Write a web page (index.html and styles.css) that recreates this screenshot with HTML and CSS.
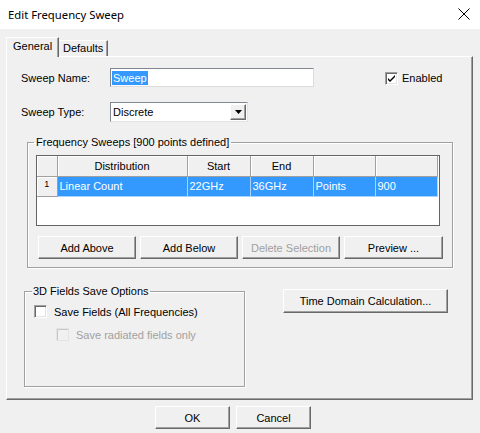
FILE: index.html
```html
<!doctype html>
<html lang="en">
   <head>
      <meta charset="UTF-8" />
      <title>Edit Frequency Sweep</title>
      <link rel="stylesheet" href="styles.css">
   </head>
   <body>
      <div class="titlebar">
         <span class="title">Edit Frequency Sweep</span>
         <svg class="close" width="12" height="12" viewBox="0 0 12 12">
            <path d="M0.5 0.5 L11.5 11.5 M11.5 0.5 L0.5 11.5" stroke="#000" stroke-width="1" fill="none" />
         </svg>
      </div>
      <div class="client">
         <div class="tabs">
            <div class="tab active">General</div>
            <div class="tab">Defaults</div>
         </div>
         <div class="panel">
            <div class="row row-name">
               <span class="lbl">Sweep Name:</span>
               <div class="edit"><span class="sel">Sweep</span></div>
               <div class="check enabled">
                  <span class="box">
                     <svg width="9" height="9" viewBox="0 0 9 9">
                        <path d="M1 4 L3 6 L8 1 L8 3 L3 8 L1 6 Z" fill="#000" />
                     </svg>
                  </span>
                  Enabled
               </div>
            </div>
            <div class="row row-type">
               <span class="lbl">Sweep Type:</span>
               <div class="combo">
                  <span class="combo-text">Discrete</span>
                  <span class="drop">
                     <svg width="7" height="4" viewBox="0 0 7 4"><path d="M0 0 H7 L3.5 4 Z" fill="#000" /></svg>
                  </span>
               </div>
            </div>
            <fieldset class="group sweeps">
               <legend>Frequency Sweeps [900 points defined]</legend>
               <div class="grid">
                  <table>
                     <tr class="head">
                        <th class="rh c0"></th>
                        <th class="c1">Distribution</th>
                        <th class="c2">Start</th>
                        <th class="c3">End</th>
                        <th class="c4"></th>
                        <th class="c5"></th>
                     </tr>
                     <tr class="selected">
                        <td class="rh">1</td>
                        <td>Linear Count</td>
                        <td>22GHz</td>
                        <td>36GHz</td>
                        <td>Points</td>
                        <td>900</td>
                     </tr>
                  </table>
               </div>
               <div class="btnrow">
                  <button class="btn">Add Above</button>
                  <button class="btn">Add Below</button>
                  <button class="btn" disabled>Delete Selection</button>
                  <button class="btn wide">Preview ...</button>
               </div>
            </fieldset>
            <div class="lower">
               <fieldset class="group fields">
                  <legend>3D Fields Save Options</legend>
                  <div class="check">
                     <span class="box"></span>
                     Save Fields (All Frequencies)
                  </div>
                  <div class="check sub disabled">
                     <span class="box"></span>
                     Save radiated fields only
                  </div>
               </fieldset>
               <button class="btn time">Time Domain Calculation...</button>
            </div>
         </div>
         <div class="footer">
            <button class="btn dlg">OK</button>
            <button class="btn dlg">Cancel</button>
         </div>
      </div>
   </body>
</html>
```

FILE: styles.css
```css
* {
   margin: 0;
   padding: 0;
   box-sizing: border-box;
   font-family: "Liberation Sans", Arial, sans-serif;
   font-size: 11px;
   color: #000;
}
body {
   width: 480px;
   height: 433px;
   background: #f0f0f0;
   overflow: hidden;
}
.titlebar {
   height: 29px;
   background: #fff;
   display: flex;
   align-items: center;
   justify-content: space-between;
   padding: 0 10px 0 8px;
}
.title {
   font-family: "Noto Sans", sans-serif;
   font-size: 11.3px;
}
.close {
   display: block;
   margin-top: -1px;
}
.tabs {
   display: flex;
   align-items: flex-end;
   height: 19px;
   margin: 8px 0 0 6px;
}
.tab {
   height: 16px;
   line-height: 15px;
   padding: 0 4px 0 4px;
   width: 49px;
   border-top: 1px solid #fff;
   border-right: 1px solid #696969;
   box-shadow: inset -1px 0 0 #a0a0a0;
}
.tab.active {
   position: relative;
   z-index: 1;
   width: 53px;
   height: 20px;
   margin-bottom: -1px;
   padding-left: 6px;
   line-height: 16px;
   background: #f0f0f0;
   border-left: 1px solid #fff;
}
.panel {
   width: 467px;
   height: 344px;
   margin-left: 6px;
   padding: 11px 0 0 14px;
   border: 1px solid #fff;
   border-right-color: #696969;
   border-bottom-color: #696969;
   box-shadow: inset -1px -1px 0 #a0a0a0;
}
.row {
   display: flex;
   align-items: center;
}
.lbl {
   width: 89px;
}
.edit {
   width: 204px;
   height: 19px;
   background: #fff;
   border: 1px solid #dcdcdc;
   border-top-color: #828790;
   border-left-color: #828790;
   padding: 2px 0 0 1px;
}
.sel {
   display: inline-block;
   height: 14px;
   line-height: 14px;
   padding: 0 1px;
   background: #3399ff;
   color: #fff;
}
.check {
   display: flex;
   align-items: center;
   height: 13px;
}
.box {
   display: flex;
   align-items: center;
   justify-content: center;
   width: 13px;
   height: 13px;
   margin-right: 6px;
   background: #fff;
   border: 1px solid #fff;
   border-top-color: #a0a0a0;
   border-left-color: #a0a0a0;
   box-shadow: inset 1px 1px 0 #696969, inset -1px -1px 0 #e3e3e3;
}
.box svg {
   display: block;
}
.enabled {
   margin-left: 71px;
   margin-top: 1px;
}
.enabled .box {
   margin-right: 4px;
}
.row-type {
   margin-top: 15px;
}
.combo {
   display: flex;
   align-items: center;
   justify-content: space-between;
   width: 138px;
   height: 20px;
   background: #fff;
   border: 1px solid #e3e3e3;
   border-top-color: #828790;
   border-left-color: #828790;
   padding: 0 1px 0 2px;
}
.drop {
   display: flex;
   align-items: center;
   justify-content: center;
   width: 16px;
   height: 16px;
   background: #f0f0f0;
   border: 1px solid #fff;
   border-right-color: #696969;
   border-bottom-color: #696969;
   box-shadow: inset -1px -1px 0 #a0a0a0;
}
.drop svg {
   display: block;
}
.group {
   border: 1px solid #a0a0a0;
   box-shadow: inset 1px 1px 0 #fff, 1px 1px 0 #fff;
}
.group legend {
   padding: 0 2px;
   margin-left: -2px;
   line-height: 13px;
}
.sweeps {
   width: 426px;
   margin: 14px 0 0 6px;
   padding: 6px 0 8px 8px;
}
.grid {
   width: 404px;
   height: 71px;
   background: #fff;
   border: 1px solid #646464;
}
table {
   border-collapse: collapse;
   table-layout: fixed;
   width: 400px;
}
th,
td {
   height: 20px;
   font-weight: normal;
   white-space: nowrap;
   overflow: hidden;
}
th {
   background: #f0f0f0;
   text-align: center;
   border-right: 1px solid #a0a0a0;
   border-bottom: 1px solid #a0a0a0;
   box-shadow: inset 1px 1px 0 #fff;
}
.c0 { width: 20px; }
.c1 { width: 130px; }
.c2 { width: 63px; }
.c3 { width: 63px; }
.c4 { width: 62px; }
.c5 { width: 62px; }
.selected td {
   background: #3399ff;
   color: #fff;
   text-align: left;
   padding-left: 2px;
   border-right: 1px solid #a8d2ff;
   border-bottom: 1px solid #a8d2ff;
}
.selected td.rh {
   background: #f0f0f0;
   color: #000;
   font-size: 9px;
   vertical-align: top;
   text-align: center;
   padding: 2px 0 0 0;
   border-right: 1px solid #a0a0a0;
   border-bottom: 1px solid #a0a0a0;
   box-shadow: inset 1px 1px 0 #fff;
}
.btnrow {
   display: flex;
   gap: 4px;
   margin: 10px 0 0 2px;
}
.btn {
   width: 98px;
   height: 23px;
   background: #f0f0f0;
   border: 1px solid #fff;
   border-right-color: #696969;
   border-bottom-color: #696969;
   box-shadow: inset -1px -1px 0 #a0a0a0;
   text-align: center;
}
.btn.wide {
   width: 99px;
}
.btn:disabled {
   color: #a0a0a0;
}
.lower {
   display: flex;
   align-items: flex-start;
   margin: 17px 0 0 3px;
}
.fields {
   width: 221px;
   height: 102px;
   padding: 7px 0 0 9px;
}
.fields legend {
   padding: 0 1px;
}
.fields .check .box {
   margin-right: 7px;
}
.sub {
   margin: 10px 0 0 22px;
}
.disabled {
   color: #a0a0a0;
}
.disabled .box {
   background: #f0f0f0;
   border-color: #e3e3e3;
   box-shadow: inset 1px 1px 0 #c8c8c8;
}
.btn.time {
   width: 165px;
   height: 24px;
   margin: 4px 0 0 38px;
}
.footer {
   display: flex;
   gap: 6px;
   margin: 6px 0 0 155px;
}
.btn.dlg {
   width: 75px;
}
```
